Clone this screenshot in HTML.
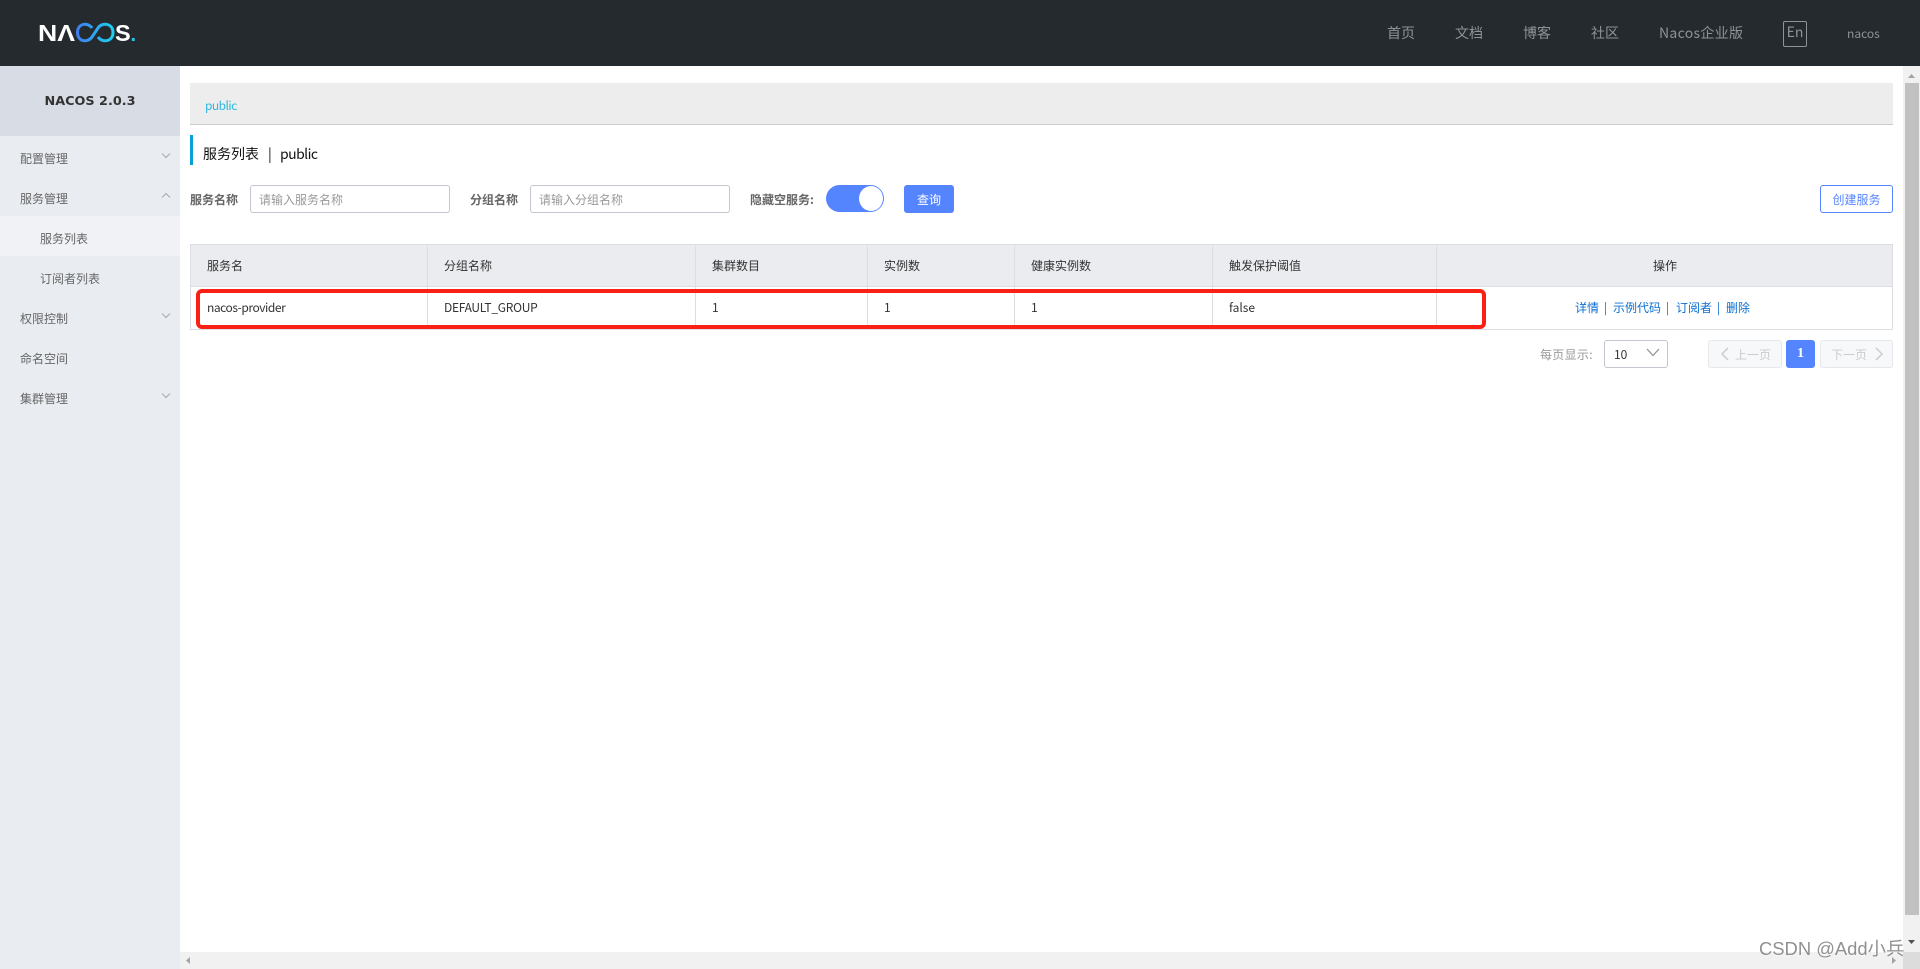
<!DOCTYPE html>
<html lang="zh">
<head>
<meta charset="utf-8">
<title>Nacos</title>
<style>
html,body{margin:0;padding:0;width:1920px;height:969px;overflow:hidden;background:#fff}
body{position:relative;font-family:"Noto Sans CJK SC","Liberation Sans",sans-serif;font-size:12px;color:#333}
.a{position:absolute;white-space:nowrap}
.t{position:absolute;white-space:nowrap;line-height:20px}
#hd{left:0;top:0;width:1920px;height:66px;background:#252a2f}
.nav{top:23px;font-size:14px;color:#8d9399}
#side{left:0;top:66px;width:180px;height:903px;background:#e9ecf1}
#ver{left:0;top:67px;width:180px;height:70px;text-align:center;font:bold 12.800px/70px "DejaVu Sans",sans-serif;color:#333}
#verbg{left:0;top:66px;width:180px;height:70px;background:#d8dde5}
.m{left:20px;color:#666}
.s{left:40px;color:#666}
.chev{position:absolute;left:160px}
.box{position:absolute;box-sizing:border-box;background:#fff;border:1px solid #c4c6cf;border-radius:3px}
.ph{color:#999}
.lab{font-weight:700;color:#666}
.th{top:256px;color:#333}
.td{top:298px;color:#333}
.op{top:298px;color:#0c6fd0}
.vl{position:absolute;width:1px;background:#dcdee3;top:245px;height:84px}
</style>
</head>
<body>
<div class="a" id="hd"></div>
<svg class="a" style="left:36px;top:18px" width="106" height="30" viewBox="0 0 106 30">
<defs><linearGradient id="g" x1="0" x2="1" y1="0" y2="0"><stop offset="0" stop-color="#3f7ff0"/><stop offset="1" stop-color="#1dd0f0"/></linearGradient></defs>
<text x="2" y="23" font-family="Liberation Sans" font-weight="700" font-size="23.500" fill="#fff" textLength="37" lengthAdjust="spacingAndGlyphs">NΛ</text>
<path d="M56 10 C52 4 41.500 5 41.500 14.500 C41.500 24 52 25 56 19 L62 10 C66 4 77 5 77 14.500 C77 24 66 25 62 19" fill="none" stroke="url(#g)" stroke-width="3"/>
<text x="79" y="23" font-family="Liberation Sans" font-weight="700" font-size="23.500" fill="#fff">S</text>
<text x="94.500" y="23" font-family="Liberation Sans" font-weight="700" font-size="20" fill="#22c8e8">.</text>
</svg>
<div class="t nav" style="left:1387px">首页</div>
<div class="t nav" style="left:1455px">文档</div>
<div class="t nav" style="left:1523px">博客</div>
<div class="t nav" style="left:1591px">社区</div>
<div class="t nav" style="left:1659px;letter-spacing:.3px">Nacos企业版</div>
<div class="a" style="left:1783px;top:21px;width:22px;height:24px;border:1px solid #8d9399;border-radius:2px;color:#8d9399;font-size:14px;line-height:20px;text-align:center">En</div>
<div class="t" style="left:1847px;top:24px;color:#8d9399;font-size:12px">nacos</div>

<div class="a" id="side"></div>
<div class="a" id="verbg"></div>
<div class="a" id="ver">NACOS 2.0.3</div>
<div class="a" style="left:0;top:216px;width:180px;height:40px;background:#f0f2f5"></div>
<div class="t m" style="top:149px">配置管理</div>
<div class="t m" style="top:189px">服务管理</div>
<div class="t s" style="top:229px">服务列表</div>
<div class="t s" style="top:269px">订阅者列表</div>
<div class="t m" style="top:309px">权限控制</div>
<div class="t m" style="top:349px">命名空间</div>
<div class="t m" style="top:389px">集群管理</div>
<svg class="chev" style="top:152px" width="12" height="8"><path d="M2 1.500 L6 5.500 L10 1.500" fill="none" stroke="#a3a8b0" stroke-width="1"/></svg>
<svg class="chev" style="top:192px" width="12" height="8"><path d="M2 5.500 L6 1.500 L10 5.500" fill="none" stroke="#a3a8b0" stroke-width="1"/></svg>
<svg class="chev" style="top:312px" width="12" height="8"><path d="M2 1.500 L6 5.500 L10 1.500" fill="none" stroke="#a3a8b0" stroke-width="1"/></svg>
<svg class="chev" style="top:392px" width="12" height="8"><path d="M2 1.500 L6 5.500 L10 1.500" fill="none" stroke="#a3a8b0" stroke-width="1"/></svg>

<div class="a" style="left:190px;top:83px;width:1703px;height:42px;background:#ededed;border-bottom:1px solid #ccc;box-sizing:border-box"></div>
<div class="t" style="left:205px;top:96px;color:#2cb7dc;letter-spacing:-.55px">public</div>
<div class="a" style="left:190px;top:135px;width:3px;height:30px;background:#09a0d8"></div>
<div class="t" style="left:203px;top:144px;font-size:14px;color:#111">服务列表</div>
<div class="t" style="left:268px;top:144px;font-size:14px;color:#111">|</div>
<div class="t" style="left:280px;top:144px;font-size:14px;color:#111;letter-spacing:-.55px">public</div>

<div class="t lab" style="left:190px;top:190px">服务名称</div>
<div class="box" style="left:250px;top:185px;width:200px;height:28px"></div>
<div class="t ph" style="left:259px;top:190px">请输入服务名称</div>
<div class="t lab" style="left:470px;top:190px">分组名称</div>
<div class="box" style="left:530px;top:185px;width:200px;height:28px"></div>
<div class="t ph" style="left:539px;top:190px">请输入分组名称</div>
<div class="t lab" style="left:750px;top:190px">隐藏空服务:</div>
<div class="a" style="left:826px;top:185px;width:58px;height:27px;border-radius:14px;background:#5584ff"></div>
<div class="a" style="left:859px;top:186px;width:24px;height:25px;border-radius:50%;background:#fff"></div>
<div class="a" style="left:904px;top:185px;width:50px;height:28px;background:#5584ff;border-radius:3px;color:#fff;text-align:center;line-height:30px">查询</div>
<div class="a" style="left:1820px;top:185px;width:73px;height:28px;box-sizing:border-box;border:1px solid #5584ff;border-radius:3px;color:#5584ff;text-align:center;line-height:28px">创建服务</div>

<div class="a" style="left:190px;top:244px;width:1703px;height:86px;box-sizing:border-box;border:1px solid #dcdee3"></div>
<div class="a" style="left:191px;top:245px;width:1701px;height:41px;background:#ebecf0;border-bottom:1px solid #dcdee3"></div>
<div class="vl" style="left:427px"></div>
<div class="vl" style="left:695px"></div>
<div class="vl" style="left:867px"></div>
<div class="vl" style="left:1014px"></div>
<div class="vl" style="left:1212px"></div>
<div class="vl" style="left:1436px"></div>
<div class="t th" style="left:207px">服务名</div>
<div class="t th" style="left:444px">分组名称</div>
<div class="t th" style="left:712px">集群数目</div>
<div class="t th" style="left:884px">实例数</div>
<div class="t th" style="left:1031px">健康实例数</div>
<div class="t th" style="left:1229px">触发保护阈值</div>
<div class="t th" style="left:1653px">操作</div>
<div class="t td" style="left:207px;letter-spacing:-.45px">nacos-provider</div>
<div class="t td" style="left:444px;letter-spacing:-.28px">DEFAULT_GROUP</div>
<div class="t td" style="left:712px">1</div>
<div class="t td" style="left:884px">1</div>
<div class="t td" style="left:1031px">1</div>
<div class="t td" style="left:1229px">false</div>
<div class="t op" style="left:1575px">详情</div>
<div class="t op" style="left:1604px">|</div>
<div class="t op" style="left:1613px">示例代码</div>
<div class="t op" style="left:1666px">|</div>
<div class="t op" style="left:1676px">订阅者</div>
<div class="t op" style="left:1717px">|</div>
<div class="t op" style="left:1726px">删除</div>
<div class="a" style="left:196px;top:289px;width:1290px;height:40px;box-sizing:border-box;border:4px solid #fb2016;border-radius:6px"></div>

<div class="t" style="left:1540px;top:345px;color:#999;letter-spacing:.3px">每页显示:</div>
<div class="box" style="left:1604px;top:340px;width:64px;height:28px"></div>
<div class="t" style="left:1614px;top:345px;color:#333">10</div>
<svg class="a" style="left:1645px;top:347px" width="16" height="12"><path d="M2 2 L8 8.500 L14 2" fill="none" stroke="#8e8e98" stroke-width="1.200"/></svg>
<div class="a" style="left:1708px;top:340px;width:74px;height:28px;box-sizing:border-box;background:#f7f8fa;border:1px solid #e6e7eb;border-radius:3px;color:#ccc;line-height:28px;padding-left:26px">上一页</div>
<svg class="a" style="left:1720px;top:347px" width="10" height="14"><path d="M8 1 L2 7 L8 13" fill="none" stroke="#ccc" stroke-width="1.500"/></svg>
<div class="a" style="left:1786px;top:340px;width:29px;height:28px;background:#5584ff;border-radius:3px;color:#fff;text-align:center;font:bold 14px/28px 'Liberation Serif',serif">1</div>
<div class="a" style="left:1820px;top:340px;width:73px;height:28px;box-sizing:border-box;background:#f7f8fa;border:1px solid #e6e7eb;border-radius:3px;color:#ccc;line-height:28px;padding-left:10px">下一页</div>
<svg class="a" style="left:1874px;top:347px" width="10" height="14"><path d="M2 1 L8 7 L2 13" fill="none" stroke="#ccc" stroke-width="1.500"/></svg>

<div class="a" style="left:1903px;top:66px;width:17px;height:903px;background:#f1f1f1"></div>
<div class="a" style="left:1905px;top:83px;width:14px;height:832px;background:#c1c1c1"></div>
<svg class="a" style="left:1903px;top:70px" width="17" height="10"><path d="M5 8 L8.500 4 L12 8Z" fill="#a3a3a3"/></svg>
<svg class="a" style="left:1903px;top:937px" width="17" height="10"><path d="M5 3 L8.500 7 L12 3Z" fill="#505050"/></svg>
<div class="a" style="left:180px;top:952px;width:1723px;height:17px;background:#f1f1f1"></div>
<div class="a" style="left:1903px;top:952px;width:17px;height:17px;background:#dcdcdc"></div>
<svg class="a" style="left:184px;top:952px" width="10" height="17"><path d="M6 5 L2 8.500 L6 12Z" fill="#a3a3a3"/></svg>
<svg class="a" style="left:1889px;top:952px" width="10" height="17"><path d="M3 5 L7 8.500 L3 12Z" fill="#a3a3a3"/></svg>
<div class="a" style="left:1759px;top:937px;font:18.400px/24px 'Liberation Sans','Noto Sans CJK SC',sans-serif;color:rgba(125,125,125,.85);text-shadow:0 0 2px #fff">CSDN @Add小兵</div>
</body>
</html>
